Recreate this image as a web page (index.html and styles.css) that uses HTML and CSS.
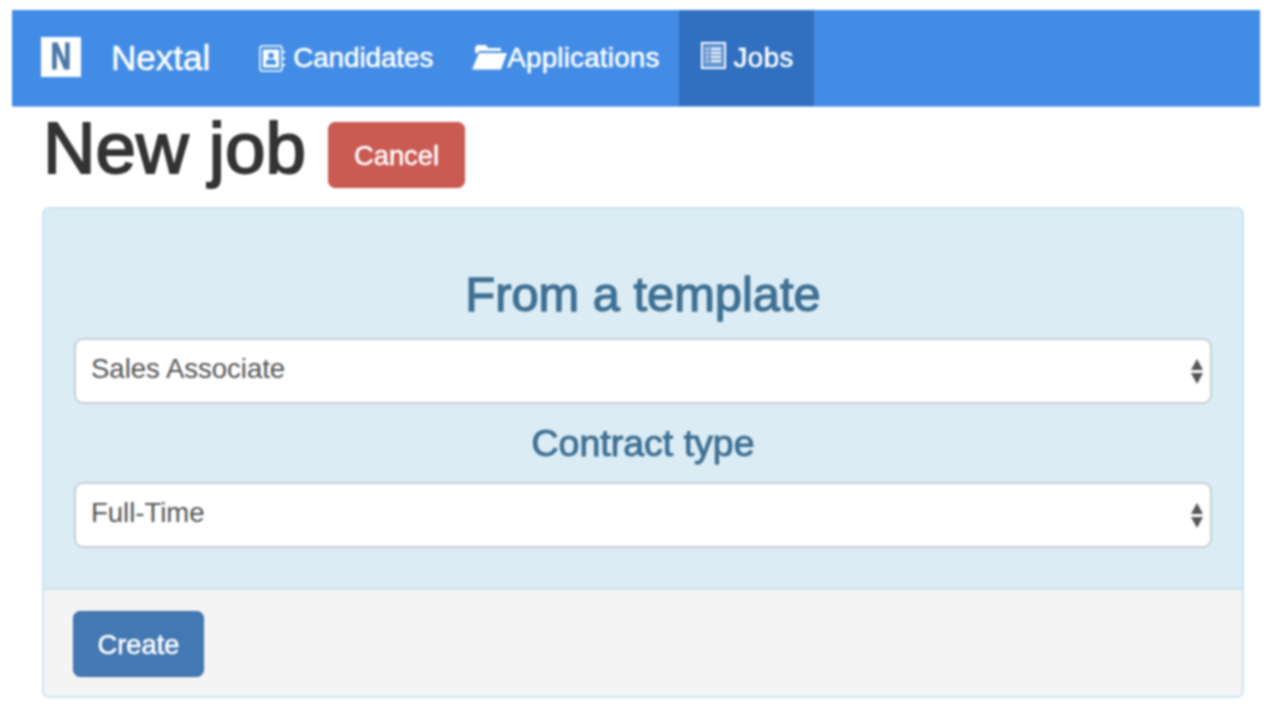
FILE: index.html
```html
<!DOCTYPE html>
<html lang="en">
<head>
<meta charset="utf-8">
<title>New job</title>
<link rel="stylesheet" href="styles.css">
</head>
<body>
<div class="page">
  <nav class="navbar">
    <a class="brand" href="#">
      <span class="logo"><span class="logo-n">N</span></span>
      <span>Nextal</span>
    </a>
    <a class="nav-link" href="#">
      <svg class="icon icon-book" viewBox="0 0 27 27" aria-hidden="true">
        <rect x="1" y="1" width="22" height="25" rx="2.500" fill="none" stroke="#fff" stroke-width="1.500"/>
        <path fill="#fff" d="M4 4.500h16v18H4z"/>
        <circle cx="12" cy="10.500" r="2.800" fill="#428ce6"/>
        <path fill="#428ce6" d="M7 19.500v-2c0-2 1.500-3 3-3h4c1.500 0 3 1 3 3v2z"/>
        <path stroke="#fff" stroke-width="2.200" d="M23 7h3M23 13.500h3M23 20h3"/>
      </svg>
      <span>Candidates</span>
    </a>
    <a class="nav-link nav-link-wide" href="#">
      <svg class="icon icon-folder" viewBox="0 0 35 26" aria-hidden="true">
        <path fill="#fff" d="M3 9V3.500L5 1h9l2 3h13v3H7.500L5.500 9z"/>
        <path fill="#fff" d="M7 9h28l-6 16.500H0z"/>
      </svg>
      <span>Applications</span>
    </a>
    <a class="nav-link active" href="#">
      <svg class="icon icon-list" viewBox="0 0 25 27" aria-hidden="true">
        <rect x="1" y="1" width="23" height="25" fill="none" stroke="#fff" stroke-width="2"/>
        <path fill="#fff" fill-opacity=".3" d="M3 3h19v21H3z"/>
        <path stroke="#fff" stroke-width="1.800" d="M10 7h10M10 11h10M10 15h10M10 19h10"/>
        <path stroke="#fff" stroke-opacity=".6" stroke-width="1.500" d="M4 7h4M4 11h4M4 15h4M4 19h4"/>
      </svg>
      <span>Jobs</span>
    </a>
  </nav>

  <header class="page-head">
    <h1 class="page-title">New job</h1>
    <a class="btn btn-danger" href="#">Cancel</a>
  </header>

  <section class="panel">
    <div class="panel-body">
      <h3 class="panel-title">From a template</h3>
      <div class="select-wrap">
        <select class="field"><option>Sales Associate</option></select>
        <svg class="arrows" viewBox="0 0 14 28" aria-hidden="true"><path fill="#555" d="M7 1l6 11H1zM1 15h12L7 26z"/></svg>
      </div>
      <h4 class="field-title">Contract type</h4>
      <div class="select-wrap">
        <select class="field"><option>Full-Time</option></select>
        <svg class="arrows" viewBox="0 0 14 28" aria-hidden="true"><path fill="#555" d="M7 1l6 11H1zM1 15h12L7 26z"/></svg>
      </div>
    </div>
    <div class="panel-footer">
      <a class="btn btn-primary" href="#">Create</a>
    </div>
  </section>
</div>
</body>
</html>
```

FILE: styles.css
```css
* { box-sizing: border-box; }

html, body { margin: 0; padding: 0; background: #fff; }

body {
  font-family: "Liberation Sans", Arial, sans-serif;
  color: #333;
  overflow: hidden;
}

.page {
  height: 722px;
  padding: 10px 8px 0 12px;
  filter: blur(0.8px);
}

a { text-decoration: none; }

.navbar {
  display: flex;
  align-items: stretch;
  height: 97px;
  background: #428ce6;
  border-bottom: 1px solid #8fbcf0;
}

.brand {
  display: flex;
  align-items: center;
  gap: 30px;
  padding: 0 29px;
  color: #fff;
  font-size: 35px;
  -webkit-text-stroke: 0.5px #fff;
}

.logo {
  display: flex;
  align-items: center;
  justify-content: center;
  width: 40px;
  height: 40px;
  margin-bottom: 2px;
  background: #fff;
}

.logo-n {
  font-size: 36px;
  font-weight: 700;
  line-height: 1;
  color: #4a78a8;
  -webkit-text-stroke: 1px #4a78a8;
  transform: scaleX(0.78);
}

.nav-link {
  display: flex;
  align-items: center;
  padding: 0 20px;
  color: #fff;
  font-size: 27.7px;
  -webkit-text-stroke: 0.5px #fff;
}

.nav-link-wide { padding: 0 19px; letter-spacing: 0.25px; }

.nav-link.active {
  background: #3170c0;
  padding: 0 20px 0 22px;
  letter-spacing: 0.4px;
}

.icon { display: block; flex: none; }
.icon-book { width: 27px; height: 27px; margin-right: 7px; }
.icon-folder { width: 35px; height: 26px; margin-bottom: 2px; }
.icon-list { width: 25px; height: 27px; margin-right: 8px; margin-bottom: 6px; }

.page-head {
  display: flex;
  align-items: flex-end;
  gap: 22px;
  height: 81px;
  padding-left: 31px;
  margin-bottom: 19px;
}

.page-title {
  margin: 0;
  font-size: 72.8px;
  font-weight: 400;
  -webkit-text-stroke: 1.9px #333;
  line-height: 81px;
  color: #333;
}

.btn {
  display: flex;
  align-items: center;
  justify-content: center;
  height: 66px;
  padding-top: 2px;
  border-radius: 7px;
  color: #fff;
  font-size: 27.4px;
  -webkit-text-stroke: 0.5px #fff;
}

.btn-danger { width: 137px; background: #ca5b53; border: 1px solid #c4554d; }
.btn-primary { width: 131px; background: #4478b2; border: 1px solid #3f6fa6; }

.panel {
  margin: 0 16px 0 30px;
  height: 491px;
  border: 2px solid #c9e6f3;
  border-radius: 7px;
  overflow: hidden;
}

.panel-body {
  height: 379px;
  padding: 58px 30px 0;
  background: #dbecf5;
}

.panel-title {
  margin: 0 0 17px;
  text-align: center;
  font-size: 48.8px;
  font-weight: 400;
  line-height: 54px;
  color: #3f7093;
  -webkit-text-stroke: 1.3px #3f7093;
}

.field-title {
  margin: 19px 0;
  text-align: center;
  font-size: 37.5px;
  font-weight: 400;
  line-height: 40px;
  color: #3f7093;
  -webkit-text-stroke: 1px #3f7093;
}

.select-wrap { position: relative; }

.field {
  display: block;
  width: 100%;
  height: 66px;
  padding: 0 15px 5px;
  appearance: none;
  -webkit-appearance: none;
  background: #fff;
  border: 2px solid #c6ced4;
  border-radius: 9px;
  font-family: "Liberation Sans", Arial, sans-serif;
  font-size: 27.5px;
  color: #555;
}

.arrows {
  position: absolute;
  right: 8px;
  top: 20px;
  width: 14px;
  height: 28px;
}

.panel-footer {
  height: 108px;
  padding: 21px 29px;
  background: #f4f4f4;
  border-top: 2px solid #cfe1ea;
}
```
